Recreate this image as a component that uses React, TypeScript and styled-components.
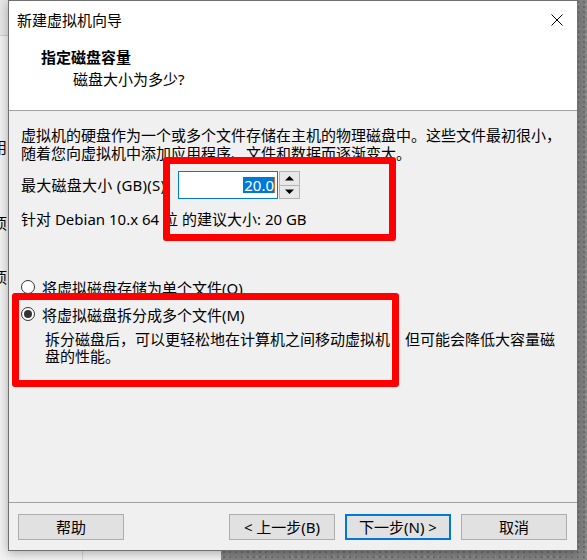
import React from "react";
import styled, { createGlobalStyle, css } from "styled-components";

const FONT = `"Noto Sans", "Noto Sans CJK SC", sans-serif`;

const Global = createGlobalStyle`
  html, body { margin: 0; padding: 0; }
  body {
    width: 587px;
    height: 560px;
    overflow: hidden;
    font-family: ${FONT};
    color: #000;
  }
  * { box-sizing: border-box; }
`;

const Desktop = styled.div`
  position: relative;
  width: 587px;
  height: 560px;
  overflow: hidden;
  background-color: #838383;
  background-image:
    radial-gradient(circle at 30% 40%, rgba(60, 60, 60, 0.35) 0.8px, transparent 1.4px),
    radial-gradient(circle at 70% 75%, rgba(200, 200, 200, 0.25) 0.8px, transparent 1.4px);
  background-size: 6px 5px, 7px 6px;
`;

/* window behind the dialog */
const BackWindow = styled.div`
  position: absolute;
  left: 0;
  top: 0;
  width: 221px;
  height: 560px;
  background: #f2f2f2;
  display: flex;
  flex-direction: column;
`;

const BackTitle = styled.div`
  height: 36px;
  flex: none;
  background: #e6e6e6;
  border-bottom: 1px solid #cfcfcf;
`;

const BackPanes = styled.div`
  flex: 1;
  display: flex;
`;

const BackSide = styled.div`
  width: 83px;
  border-right: 1px solid #d6d6d6;
  display: flex;
  flex-direction: column;
`;

const BackItem = styled.div<{ $top: number }>`
  margin-top: ${(p) => p.$top}px;
  margin-left: -8px;
  font-size: 15px;
  line-height: 18px;
  white-space: nowrap;
`;

/* dialog */
const Dialog = styled.div`
  position: absolute;
  left: 8px;
  top: 0;
  width: 570px;
  height: 551px;
  border: 1px solid #707070;
  background: #f0f0f0;
  display: flex;
  flex-direction: column;
  box-shadow: 0 2px 10px rgba(0, 0, 0, 0.3);
`;

const TitleBar = styled.div`
  height: 37px;
  flex: none;
  background: #fff;
  display: flex;
  align-items: center;
  justify-content: space-between;
  padding: 0 14px 0 8px;
`;

const TitleText = styled.div`
  font-size: 15px;
  line-height: 20px;
`;

const Header = styled.div`
  height: 73px;
  flex: none;
  background: #fff;
  border-bottom: 1px solid #a0a0a0;
  padding: 9px 0 0 32px;
`;

const HeaderTitle = styled.div`
  font-size: 15px;
  font-weight: bold;
  line-height: 20px;
`;

const HeaderSub = styled.div`
  font-size: 15px;
  line-height: 20px;
  margin: 2px 0 0 32px;
`;

const Body = styled.div`
  flex: 1;
  padding: 15px 0 0 12px;
  font-size: 15px;
`;

const Paragraph = styled.p`
  margin: 0;
  width: 545px;
  line-height: 18px;
`;

const SizeRow = styled.div`
  display: flex;
  align-items: center;
  height: 28px;
  margin-top: 9px;
`;

const SizeLabel = styled.div`
  width: 157px;
  white-space: nowrap;
  line-height: 18px;
  letter-spacing: 0.25px;
`;

const NumberBox = styled.div`
  width: 100px;
  height: 28px;
  border: 1px solid #0078d7;
  background: #fff;
  display: flex;
  align-items: center;
  justify-content: flex-end;
  padding-right: 2px;
`;

const Selected = styled.span`
  background: #0078d7;
  color: #fff;
  line-height: 16px;
  padding: 0 0 0 1px;
`;

const Caret = styled.span`
  width: 1px;
  height: 16px;
  background: #c8742f;
`;

const Spinner = styled.div`
  width: 21px;
  height: 28px;
  margin-left: 1px;
  display: flex;
  flex-direction: column;
  border: 1px solid #b4b4b4;
  background: #e8e8e8;
`;

const SpinButton = styled.div<{ $down?: boolean }>`
  flex: 1;
  display: flex;
  align-items: center;
  justify-content: center;
  ${(p) =>
    p.$down &&
    css`
      border-top: 1px solid #b4b4b4;
    `}
`;

const Recommend = styled.div`
  margin-top: 11px;
  line-height: 18px;
  white-space: nowrap;
`;

const RadioGroup = styled.div`
  margin-top: 50px;
  display: flex;
  flex-direction: column;
`;

const RadioRow = styled.div<{ $gap?: number }>`
  display: flex;
  align-items: center;
  gap: 7px;
  height: 18px;
  margin-top: ${(p) => p.$gap ?? 0}px;
`;

const RadioCircle = styled.span<{ $checked?: boolean }>`
  width: 14px;
  height: 14px;
  border-radius: 50%;
  border: 1px solid #333;
  background: #fff;
  display: flex;
  align-items: center;
  justify-content: center;
  flex: none;
  &::after {
    content: "";
    width: 8px;
    height: 8px;
    border-radius: 50%;
    background: ${(p) => (p.$checked ? "#333" : "transparent")};
  }
`;

const Description = styled.p`
  margin: 8px 0 0 24px;
  width: 516px;
  line-height: 17px;
`;

const Footer = styled.div`
  height: 48px;
  flex: none;
  border-top: 1px solid #a0a0a0;
  display: flex;
  align-items: flex-start;
  gap: 10px;
  padding: 11px 10px 0 9px;
`;

const Button = styled.button<{ $default?: boolean; $push?: boolean }>`
  width: 106px;
  height: 26px;
  padding: 0;
  font-family: ${FONT};
  font-size: 15px;
  line-height: 18px;
  color: #000;
  background: #e1e1e1;
  border: 1px solid #adadad;
  ${(p) =>
    p.$default &&
    css`
      border: 2px solid #0078d7;
    `}
  ${(p) =>
    p.$push &&
    css`
      margin-left: auto;
    `}
`;

const RedFrame = styled.div<{ $l: number; $t: number; $w: number; $h: number }>`
  position: absolute;
  left: ${(p) => p.$l}px;
  top: ${(p) => p.$t}px;
  width: ${(p) => p.$w}px;
  height: ${(p) => p.$h}px;
  border: 7px solid #ff0000;
  border-radius: 3px;
  pointer-events: none;
`;

const CloseIcon = () => (
  <svg width="12" height="12" viewBox="0 0 12 12">
    <path d="M0.5 0.5 L11.5 11.5 M11.5 0.5 L0.5 11.5" stroke="#000" strokeWidth="1" />
  </svg>
);

const Arrow = ({ down }: { down?: boolean }) => (
  <svg width="9" height="5" viewBox="0 0 9 5">
    <path d={down ? "M0 0.5 H9 L4.5 5 Z" : "M0 4.5 H9 L4.5 0 Z"} fill="#000" />
  </svg>
);

export default function App() {
  return (
    <>
      <Global />
      <Desktop>
        <BackWindow>
          <BackTitle />
          <BackPanes>
            <BackSide>
              <BackItem $top={102}>用</BackItem>
              <BackItem $top={58}>项</BackItem>
              <BackItem $top={36}>项</BackItem>
            </BackSide>
          </BackPanes>
        </BackWindow>

        <Dialog>
          <TitleBar>
            <TitleText>新建虚拟机向导</TitleText>
            <CloseIcon />
          </TitleBar>
          <Header>
            <HeaderTitle>指定磁盘容量</HeaderTitle>
            <HeaderSub>磁盘大小为多少?</HeaderSub>
          </Header>
          <Body>
            <Paragraph>
              虚拟机的硬盘作为一个或多个文件存储在主机的物理磁盘中。这些文件最初很小，随着您向虚拟机中添加应用程序、文件和数据而逐渐变大。
            </Paragraph>
            <SizeRow>
              <SizeLabel>最大磁盘大小 (GB)(S):</SizeLabel>
              <NumberBox>
                <Selected>20.0</Selected>
                <Caret />
              </NumberBox>
              <Spinner>
                <SpinButton>
                  <Arrow />
                </SpinButton>
                <SpinButton $down>
                  <Arrow down />
                </SpinButton>
              </Spinner>
            </SizeRow>
            <Recommend>针对 Debian 10.x 64 位 的建议大小: 20 GB</Recommend>
            <RadioGroup>
              <RadioRow>
                <RadioCircle />
                <span>将虚拟磁盘存储为单个文件(O)</span>
              </RadioRow>
              <RadioRow $gap={9}>
                <RadioCircle $checked />
                <span>将虚拟磁盘拆分成多个文件(M)</span>
              </RadioRow>
              <Description>
                拆分磁盘后，可以更轻松地在计算机之间移动虚拟机，但可能会降低大容量磁盘的性能。
              </Description>
            </RadioGroup>
          </Body>
          <Footer>
            <Button>帮助</Button>
            <Button $push>&lt; 上一步(B)</Button>
            <Button $default>下一步(N) &gt;</Button>
            <Button>取消</Button>
          </Footer>
        </Dialog>

        <RedFrame $l={163} $t={157} $w={233} $h={84} />
        <RedFrame $l={12} $t={293} $w={387} $h={94} />
      </Desktop>
    </>
  );
}
